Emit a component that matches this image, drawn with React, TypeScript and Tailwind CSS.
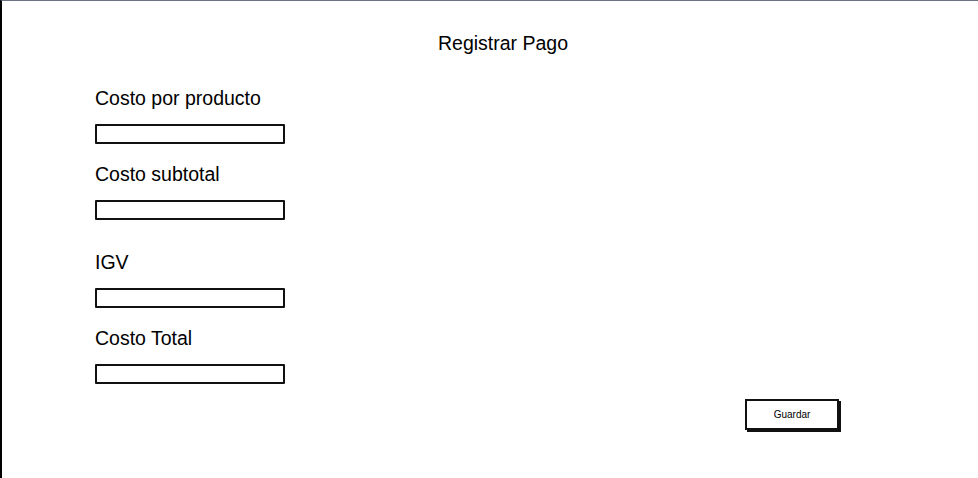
const fields = [
  { label: "Costo por producto", gap: "mt-[33px]" },
  { label: "Costo subtotal", gap: "mt-[19px]" },
  { label: "IGV", gap: "mt-[31px]" },
  { label: "Costo Total", gap: "mt-[19px]" },
];

export default function App() {
  return (
    <div
      className="relative h-[478px] w-[978px] overflow-hidden bg-white border-l-2 border-t border-l-black border-t-gray-500 text-black"
      style={{ fontFamily: '"Liberation Sans", Arial, sans-serif' }}
    >
      {/* titulo */}
      <div className="pt-[31px] pl-[26px] text-center text-[19.5px] leading-[22px]">
        Registrar Pago
      </div>

      {/* formulario */}
      <div className="flex flex-col pl-[93px]">
        {fields.map((f, i) => (
          <div key={i} className={"flex flex-col " + f.gap}>
            <label className="text-[19.5px] leading-[22px]">{f.label}</label>
            <input
              type="text"
              className="mt-[15px] h-[20px] w-[190px] rounded-[1px] border-2 border-[#111] bg-white outline-none"
            />
          </div>
        ))}
      </div>

      <div className="flex justify-end pr-[139px] mt-[15px]">
        <button className="h-[31px] w-[94px] border-2 border-[#111] bg-white text-[10px] shadow-[2px_2px_0_#111]">
          Guardar
        </button>
      </div>
    </div>
  );
}
